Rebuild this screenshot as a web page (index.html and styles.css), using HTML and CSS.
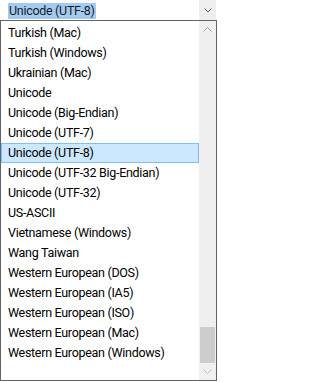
FILE: index.html
```html
<!DOCTYPE html>
<html>
<head>
<meta charset="utf-8">
<link rel="stylesheet" href="styles.css">
</head>
<body>
<div class="combo">
  <div class="combo-field"><span class="sel">Unicode (UTF-8)</span></div>
  <div class="combo-btn">
    <svg width="8" height="5" viewBox="0 0 8 5"><path d="M0.5 0.5 L4 4 L7.5 0.5" fill="none" stroke="#606060" stroke-width="1"/></svg>
  </div>
</div>
<div class="list">
  <ul class="items">
    <li>Turkish (Mac)</li>
    <li>Turkish (Windows)</li>
    <li>Ukrainian (Mac)</li>
    <li>Unicode</li>
    <li>Unicode (Big-Endian)</li>
    <li>Unicode (UTF-7)</li>
    <li class="active">Unicode (UTF-8)</li>
    <li>Unicode (UTF-32 Big-Endian)</li>
    <li>Unicode (UTF-32)</li>
    <li>US-ASCII</li>
    <li>Vietnamese (Windows)</li>
    <li>Wang Taiwan</li>
    <li>Western European (DOS)</li>
    <li>Western European (IA5)</li>
    <li>Western European (ISO)</li>
    <li>Western European (Mac)</li>
    <li>Western European (Windows)</li>
  </ul>
  <div class="scrollbar">
    <div class="sb-btn">
      <svg width="9" height="5" viewBox="0 0 9 5"><path d="M0.5 4.5 L4.5 0.5 L8.5 4.5" fill="none" stroke="#a3a3a3" stroke-width="1"/></svg>
    </div>
    <div class="track"><div class="thumb"></div></div>
    <div class="sb-btn">
      <svg width="9" height="5" viewBox="0 0 9 5"><path d="M0.5 0.5 L4.5 4.5 L8.5 0.5" fill="none" stroke="#bfbfbf" stroke-width="1"/></svg>
    </div>
  </div>
</div>
</body>
</html>
```
FILE: styles.css
```css
html, body {
  margin: 0;
  padding: 0;
  background: #ffffff;
}
body {
  width: 217px;
  height: 382px;
  overflow: hidden;
  font-family: Roboto, "Noto Sans", sans-serif;
  font-size: 12.5px;
  letter-spacing: -0.3px;
  color: #000000;
}
.combo {
  display: flex;
  height: 20px;
}
.combo-field {
  flex: 1;
  padding: 3px 0 0 8px;
}
.sel {
  display: inline-block;
  height: 16px;
  line-height: 16px;
  padding: 0 1px;
  background: #a3cbee;
  color: #1a1a2e;
}
.combo-btn {
  width: 17px;
  margin-right: 1px;
  background: #efefef;
  display: flex;
  align-items: center;
  justify-content: center;
}
.list {
  box-sizing: border-box;
  height: 361px;
  border: 1px solid #646464;
  display: flex;
}
.items {
  list-style: none;
  margin: 0;
  padding: 2px 0 0 0;
  flex: 1;
}
.items li {
  box-sizing: border-box;
  height: 20px;
  line-height: 18px;
  padding-left: 6px;
  border: 1px solid transparent;
  white-space: nowrap;
}
.items li.active {
  background: #cce8ff;
  border-color: #84bdf0;
}
.scrollbar {
  width: 17px;
  background: #f0f0f0;
  display: flex;
  flex-direction: column;
}
.sb-btn {
  height: 17px;
  display: flex;
  align-items: center;
  justify-content: center;
}
.track {
  flex: 1;
  display: flex;
  flex-direction: column;
  justify-content: flex-end;
}
.thumb {
  height: 36px;
  margin: 0 1px;
  background: #cdcdcd;
}
```
